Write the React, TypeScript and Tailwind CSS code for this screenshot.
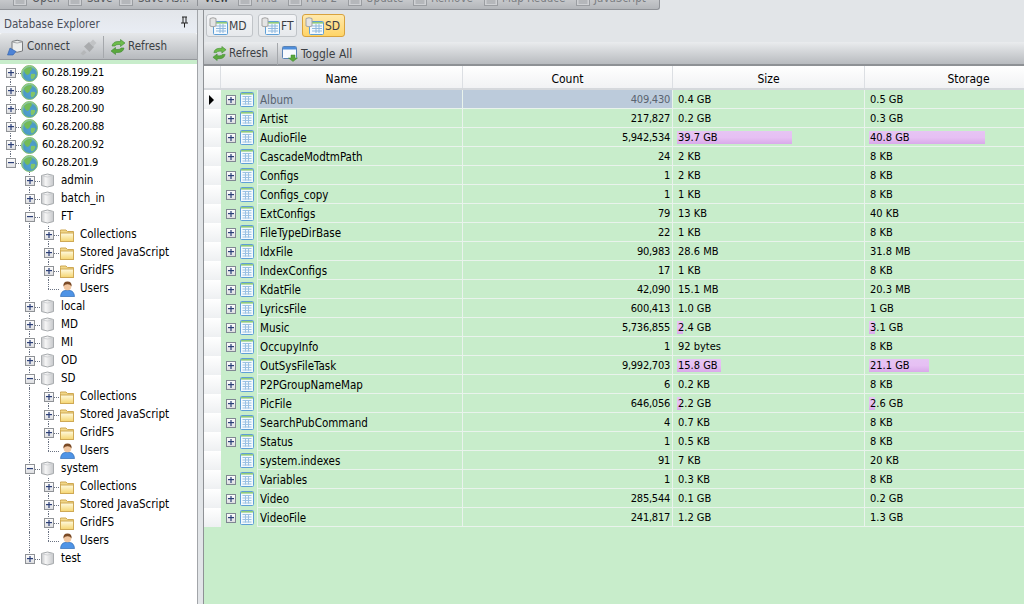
import React from 'react';

const font = "font-['DejaVu_Sans_Condensed','DejaVu_Sans',sans-serif]";

const PlusBox = ({ open = false, tree = false }: { open?: boolean; tree?: boolean }) => (
  <svg width="10" height="10" viewBox="0 0 10 10" className="relative block shrink-0">
    <defs>
      <linearGradient id="boxg" x1="0" y1="0" x2="0" y2="1">
        <stop offset="0" stopColor="#ffffff" />
        <stop offset="1" stopColor="#dcdde0" />
      </linearGradient>
    </defs>
    <rect x="0.5" y="0.5" width="9" height="9" fill="url(#boxg)" stroke={tree ? '#8f9296' : '#7f8792'} />
    <rect x="2" y="4" width="6" height="1.2" fill="#2b3f78" />
    {!open && <rect x="4.4" y="2" width="1.2" height="6" fill="#2b3f78" />}
  </svg>
);

const Globe = () => (
  <svg width="17" height="17" viewBox="0 0 17 17" className="block shrink-0">
    <defs>
      <radialGradient id="gl" cx="0.55" cy="0.6" r="0.6">
        <stop offset="0" stopColor="#4f9fd6" />
        <stop offset="0.65" stopColor="#4c9ac4" />
        <stop offset="1" stopColor="#a4d88f" />
      </radialGradient>
    </defs>
    <circle cx="8.5" cy="8.5" r="8" fill="url(#gl)" stroke="#86c070" />
    <path d="M3 5 Q6 1.5 10 2 Q12 4 9.5 6 Q9 9 6.5 10 Q3.5 9 3 5Z" fill="#74bb58" />
    <path d="M10 9 Q14 8 14.5 10 Q13.5 14 10.5 14.5 Q9 12 10 9Z" fill="#82c568" />
  </svg>
);

const Db = () => (
  <svg width="13" height="15" viewBox="0 0 13 15" className="-mt-px block shrink-0">
    <defs>
      <linearGradient id="dbg" x1="0" y1="0" x2="1" y2="0">
        <stop offset="0" stopColor="#c4c6c9" />
        <stop offset="0.35" stopColor="#f6f6f6" />
        <stop offset="1" stopColor="#c6c8cb" />
      </linearGradient>
    </defs>
    <path d="M0.5 2.5 Q6.5 -0.5 12.5 2.5 V12.5 Q6.5 15.5 0.5 12.5Z" fill="url(#dbg)" stroke="#a9acaf" />
    <path d="M1 3 Q6.5 5 12 3" fill="none" stroke="#d0d2d4" />
  </svg>
);

const Folder = () => (
  <svg width="14" height="13" viewBox="0 0 14 13" className="block shrink-0">
    <defs>
      <linearGradient id="fg" x1="0" y1="0" x2="0" y2="1">
        <stop offset="0" stopColor="#fffbe2" />
        <stop offset="1" stopColor="#f5d56f" />
      </linearGradient>
    </defs>
    <path d="M0.5 2.5 V1 H6 L7.5 2.5 H13.5 V12.5 H0.5Z" fill="#f1d687" stroke="#cfa955" />
    <rect x="0.5" y="4" width="13" height="8.5" fill="url(#fg)" stroke="#cfa955" />
  </svg>
);

const UserIcon = () => (
  <svg width="15" height="16" viewBox="0 0 15 16" className="block shrink-0">
    <path d="M0.5 15.5 Q1 10 5 9.5 H10 Q14 10 14.5 15.5Z" fill="#4f94e6" stroke="#2f6bb5" strokeWidth="0.7" />
    <circle cx="7.5" cy="5.5" r="3.8" fill="#f0c6a0" />
    <path d="M3.4 5.5 Q3 0.5 7.5 0.5 Q12 0.5 11.6 5.5 Q10 3 7.5 3.2 Q5 3 3.4 5.5Z" fill="#7a4a26" />
  </svg>
);

const TableIcon = () => (
  <svg width="14" height="15" viewBox="0 0 14 15" className="block shrink-0">
    <rect x="0.5" y="0.5" width="13" height="14" rx="1" fill="#f4f9fd" stroke="#5f9fd6" />
    <rect x="1" y="1" width="12" height="1.6" fill="#8fcb7a" />
    <path d="M2.5 4.5 H11.5 M2.5 7 H11.5 M2.5 9.5 H11.5 M2.5 12 H11.5" stroke="#9cc2e4" />
    <path d="M5.5 4 V12.5 M8.5 4 V12.5" stroke="#9cc2e4" />
  </svg>
);

const CollIcon = () => (
  <svg width="19" height="18" viewBox="0 0 19 18" className="block shrink-0">
    <rect x="4.5" y="4.5" width="14" height="13" rx="1" fill="#f4f9fd" stroke="#5f9fd6" />
    <rect x="5" y="5" width="13" height="1.6" fill="#8fcb7a" />
    <path d="M7 9 H17 M7 11.5 H17 M7 14 H17 M11 7 V16 M14 7 V16" stroke="#8fb8de" />
    <path d="M1 1.5 Q4 0 7 1.5 V9 Q4 10.5 1 9Z" fill="#e4e4e4" stroke="#a3a3a3" />
  </svg>
);

const RefreshIcon = ({ size = 16 }: { size?: number }) => (
  <svg width={size} height={size} viewBox="0 0 16 16" className="block shrink-0">
    <path d="M2 7 Q3 2.5 8 2.5 H10.5 V0.5 L15 4 L10.5 7.5 V5.5 H8 Q5.5 5.5 5 7Z" fill="#6dbb4b" stroke="#3f8a32" strokeWidth="0.6" />
    <path d="M14 9 Q13 13.5 8 13.5 H5.5 V15.5 L1 12 L5.5 8.5 V10.5 H8 Q10.5 10.5 11 9Z" fill="#5aa83c" stroke="#3f8a32" strokeWidth="0.6" />
  </svg>
);

const ConnectIcon = () => (
  <svg width="17" height="17" viewBox="0 0 17 17" className="block shrink-0">
    <path d="M5 2.5 Q10 0 15.5 2.5 V12 Q10 14.5 5 12Z" fill="#eceded" stroke="#77797c" />
    <path d="M5 3 Q10 5 15.5 3" fill="none" stroke="#a6a8aa" />
    <path d="M0.5 16 L3 9 L9 12.5 L6 16Z" fill="#4d83d6" stroke="#2f5ea8" strokeWidth="0.6" />
  </svg>
);

const PlugIcon = () => (
  <svg width="17" height="17" viewBox="0 0 17 17" className="block shrink-0">
    <path d="M0.5 14.5 L4 11 L6.5 13.5 L3 16.5Z" fill="#b5b7b9" />
    <path d="M4 7.5 L9 3 L14 8 L9.5 13Z" fill="#a9abad" />
    <path d="M9.5 4 L13 0.5 L16.5 4 L13 7.5Z" fill="#c1c3c5" />
  </svg>
);

const ToggleIcon = () => (
  <svg width="16" height="17" viewBox="0 0 16 17" className="block shrink-0">
    <rect x="0.5" y="1.5" width="14" height="12" rx="1" fill="#f7fafd" stroke="#5a83b5" />
    <rect x="1" y="2" width="13" height="2.5" fill="#4f8edb" />
    <path d="M9 10 H13 V13 H15.5 L11 16.5 L6.5 13 H9Z" fill="#5aa83c" stroke="#3f8a32" strokeWidth="0.5" />
  </svg>
);

const PageStub = () => (
  <svg width="14" height="14" viewBox="0 0 14 14" className="block shrink-0">
    <rect x="0.5" y="0.5" width="13" height="13" fill="#cfd1d4" stroke="#9a9da1" />
    <path d="M2.5 9 H11.5 M2.5 11 H11.5" stroke="#9a9da1" />
    <rect x="3" y="1" width="8" height="5" fill="#e4e5e7" />
  </svg>
);

type Node = {
  label: string;
  depth: 0 | 1 | 2;
  kind: 'globe' | 'db' | 'folder' | 'user';
  toggle?: 'plus' | 'minus';
  above?: boolean;
  below?: boolean;
  rail?: boolean;
};

const sub = (rail: boolean): Node[] => [
  { label: 'Collections', depth: 2, kind: 'folder', toggle: 'plus', above: true, below: true, rail },
  { label: 'Stored JavaScript', depth: 2, kind: 'folder', toggle: 'plus', above: true, below: true, rail },
  { label: 'GridFS', depth: 2, kind: 'folder', toggle: 'plus', above: true, below: true, rail },
  { label: 'Users', depth: 2, kind: 'user', above: true, rail },
];

const db = (label: string, open = false): Node => ({
  label,
  depth: 1,
  kind: 'db',
  toggle: open ? 'minus' : 'plus',
  above: true,
  below: label !== 'test',
});

const treeRows: Node[] = [
  { label: '60.28.199.21', depth: 0, kind: 'globe', toggle: 'plus', below: true },
  { label: '60.28.200.89', depth: 0, kind: 'globe', toggle: 'plus', above: true, below: true },
  { label: '60.28.200.90', depth: 0, kind: 'globe', toggle: 'plus', above: true, below: true },
  { label: '60.28.200.88', depth: 0, kind: 'globe', toggle: 'plus', above: true, below: true },
  { label: '60.28.200.92', depth: 0, kind: 'globe', toggle: 'plus', above: true, below: true },
  { label: '60.28.201.9', depth: 0, kind: 'globe', toggle: 'minus', above: true },
  db('admin'),
  db('batch_in'),
  db('FT', true),
  ...sub(true),
  db('local'),
  db('MD'),
  db('MI'),
  db('OD'),
  db('SD', true),
  ...sub(true),
  db('system', true),
  ...sub(true),
  db('test'),
];

const TreeRow = ({ node }: { node: Node }) => (
  <div className="flex h-[18px] items-center pl-px">
    {node.depth > 0 && <div className="h-full w-[19px] shrink-0" />}
    {node.depth === 2 && (
      <div className="relative h-full w-[19px] shrink-0">
        {node.rail && <div className="absolute left-[9px] top-0 h-full border-l border-dotted border-gray-500" />}
      </div>
    )}
    <div className="relative flex h-full w-[19px] shrink-0 items-center justify-center">
      {node.above && <div className="absolute left-[9px] top-0 h-[9px] border-l border-dotted border-gray-500" />}
      {node.below && <div className="absolute left-[9px] top-[9px] h-[9px] border-l border-dotted border-gray-500" />}
      <div className="absolute left-[9px] top-[9px] w-[11px] border-t border-dotted border-gray-500" />
      {node.toggle && <PlusBox tree open={node.toggle === 'minus'} />}
    </div>
    <div className={node.depth === 0 ? 'ml-px flex w-[21px] shrink-0' : 'ml-[2px] flex w-[20px] shrink-0'}>
      {node.kind === 'globe' && <Globe />}
      {node.kind === 'db' && <Db />}
      {node.kind === 'folder' && <Folder />}
      {node.kind === 'user' && <UserIcon />}
    </div>
    <span className={node.depth === 0 ? 'text-[11px] leading-[18px] tracking-[-0.35px] text-black' : '-mt-[2px] text-[11.5px] leading-[18px] text-black'}>
      {node.label}
    </span>
  </div>
);

type Coll = {
  name: string;
  count: string;
  size: string;
  storage: string;
  noPlus?: boolean;
  sizeBar?: number;
  storeBar?: number;
};

const colls: Coll[] = [
  { name: 'Album', count: '409,430', size: '0.4 GB', storage: '0.5 GB' },
  { name: 'Artist', count: '217,827', size: '0.2 GB', storage: '0.3 GB' },
  { name: 'AudioFile', count: '5,942,534', size: '39.7 GB', storage: '40.8 GB', sizeBar: 115, storeBar: 116 },
  { name: 'CascadeModtmPath', count: '24', size: '2 KB', storage: '8 KB' },
  { name: 'Configs', count: '1', size: '2 KB', storage: '8 KB' },
  { name: 'Configs_copy', count: '1', size: '1 KB', storage: '8 KB' },
  { name: 'ExtConfigs', count: '79', size: '13 KB', storage: '40 KB' },
  { name: 'FileTypeDirBase', count: '22', size: '1 KB', storage: '8 KB' },
  { name: 'IdxFile', count: '90,983', size: '28.6 MB', storage: '31.8 MB' },
  { name: 'IndexConfigs', count: '17', size: '1 KB', storage: '8 KB' },
  { name: 'KdatFile', count: '42,090', size: '15.1 MB', storage: '20.3 MB' },
  { name: 'LyricsFile', count: '600,413', size: '1.0 GB', storage: '1 GB' },
  { name: 'Music', count: '5,736,855', size: '2.4 GB', storage: '3.1 GB', sizeBar: 6, storeBar: 6 },
  { name: 'OccupyInfo', count: '1', size: '92 bytes', storage: '8 KB' },
  { name: 'OutSysFileTask', count: '9,992,703', size: '15.8 GB', storage: '21.1 GB', sizeBar: 44, storeBar: 60 },
  { name: 'P2PGroupNameMap', count: '6', size: '0.2 KB', storage: '8 KB' },
  { name: 'PicFile', count: '646,056', size: '2.2 GB', storage: '2.6 GB', sizeBar: 4, storeBar: 6 },
  { name: 'SearchPubCommand', count: '4', size: '0.7 KB', storage: '8 KB' },
  { name: 'Status', count: '1', size: '0.5 KB', storage: '8 KB' },
  { name: 'system.indexes', count: '91', size: '7 KB', storage: '20 KB', noPlus: true },
  { name: 'Variables', count: '1', size: '0.3 KB', storage: '8 KB' },
  { name: 'Video', count: '285,544', size: '0.1 GB', storage: '0.2 GB' },
  { name: 'VideoFile', count: '241,817', size: '1.2 GB', storage: '1.3 GB' },
];

const ValueCell = ({ value, bar, className }: { value: string; bar?: number; className: string }) => (
  <div className={`relative flex h-full shrink-0 items-center border-r border-[#e9f3ec] pl-[5px] pt-px ${className}`}>
    {bar && (
      <div
        className="absolute left-[4px] top-[3px] h-[13px] bg-gradient-to-b from-[#e6c4f4] via-[#e6c0f3] to-[#d9a9ea]"
        style={{ width: bar }}
      />
    )}
    <span className="relative">{value}</span>
  </div>
);

const Row = ({ c, selected }: { c: Coll; selected: boolean }) => (
  <div className="flex h-[19px] shrink-0 text-[11px] leading-[18px] text-black">
    <div className="relative flex h-[19px] w-[17px] shrink-0 items-center bg-gradient-to-b from-white to-[#eef0f2] pl-[5px]">
      {selected && <div className="h-0 w-0 border-y-[5px] border-l-[5px] border-y-transparent border-l-black" />}
    </div>
    <div className="flex h-[19px] w-[36px] shrink-0 items-center bg-[#c8edcb] pl-[5px]">
      {c.noPlus ? <div className="w-[10px]" /> : <PlusBox />}
      <div className="ml-[4px]">
        <TableIcon />
      </div>
    </div>
    <div className="flex h-[19px] min-w-0 flex-1 border-b border-[#e9f3ec] bg-[#c8edcb]">
      <div className={`flex h-full w-[206px] shrink-0 items-center border-x border-[#e9f3ec] pl-[2px] pt-px text-[11.5px] ${selected ? 'bg-[#bccbdb] text-[#5a6470]' : ''}`}>
        {c.name}
      </div>
      <div className={`flex h-full w-[210px] shrink-0 items-center justify-end border-r border-[#e9f3ec] pr-[2px] pt-px tracking-[-0.25px] ${selected ? 'bg-[#bccbdb] text-[#5a6470]' : ''}`}>
        {c.count}
      </div>
      <ValueCell value={c.size} bar={c.sizeBar} className="w-[192px]" />
      <ValueCell value={c.storage} bar={c.storeBar} className="w-[208px]" />
    </div>
  </div>
);

const HeadCell = ({ label, className }: { label: string; className: string }) => (
  <div className={`flex h-full shrink-0 items-center justify-center border-r border-[#dcdfe3] pt-[3px] ${className}`}>{label}</div>
);

const topItems = [
  { label: 'Open', cls: 'w-[68px] pl-[13px]' },
  { label: 'Save', cls: 'w-[51px]' },
  { label: 'Save As...', cls: 'w-[78px]' },
];
const topItems2 = [
  { label: 'Find', cls: 'w-[50px]' },
  { label: 'Find 2', cls: 'w-[60px]' },
  { label: 'Update', cls: 'w-[65px]' },
  { label: 'Remove', cls: 'w-[71px]' },
  { label: 'Map Reduce', cls: 'w-[92px]' },
  { label: 'JavaScript', cls: 'w-[84px]' },
];

const btn = 'flex h-[23px] items-center gap-px rounded-[3px] border pl-[2px] text-xs';

const App = () => {
  return (
    <div className={`flex h-[604px] w-[1024px] flex-col overflow-hidden bg-[#e2e5e8] ${font}`}>
      {/* cut off ribbon at the top of the window */}
      <div className="h-[10px] w-[660px] shrink-0 overflow-hidden rounded-br-[3px] border-b border-r border-[#8f9297] bg-gradient-to-b from-[#c6c8cb] to-[#b3b6ba]">
        <div className="-mt-[8px] flex h-[14px] items-center text-[11.5px] text-[#55585c]">
          {topItems.map((t) => (
            <div key={t.label} className={`flex shrink-0 items-center gap-[5px] ${t.cls}`}>
              <PageStub />
              <span>{t.label}</span>
            </div>
          ))}
          <div className="h-full w-px shrink-0 bg-[#8f9297]" />
          <div className="w-[40px] shrink-0 pl-[6px] text-[#33363a]">View</div>
          {topItems2.map((t) => (
            <div key={t.label} className={`flex shrink-0 items-center gap-[4px] text-[#7b7e82] ${t.cls}`}>
              <PageStub />
              <span>{t.label}</span>
            </div>
          ))}
        </div>
      </div>

      <div className="flex min-h-0 flex-1">
        {/* left explorer */}
        <div className="flex w-[198px] shrink-0 flex-col border-r border-[#a2a5a9] bg-white">
          <div className="flex h-[23px] shrink-0 items-center justify-between bg-gradient-to-b from-[#e3e6ea] to-[#e9edf4] pl-[4px] pr-[8px] pt-[6px] text-[11.5px] text-[#4b4f5a]">
            <span>Database Explorer</span>
            <svg width="9" height="12" viewBox="0 0 9 12" className="-mt-[6px] block">
              <path d="M2 1 H7 M3 1 V7 M6 1 V7 M1 7 H8 M4.5 7 V11.5" stroke="#222" fill="none" />
            </svg>
          </div>
          <div className="flex h-[27px] shrink-0 items-center rounded-t-[2px] border-b border-[#95989c] bg-gradient-to-b from-[#e6e8ea] to-[#b7babe] pl-[7px] pt-[2px] text-[11.5px] text-[#3c3f44]">
            <ConnectIcon />
            <span className="ml-[3px] w-[44px]">Connect</span>
            <div className="ml-[9px]">
              <PlugIcon />
            </div>
            <div className="ml-[6px] h-[22px] w-px bg-[#a5a8ac]" />
            <div className="ml-[6px]">
              <RefreshIcon />
            </div>
            <span className="ml-[2px]">Refresh</span>
          </div>
          <div className="h-[4px] shrink-0 bg-[#c8edcb]" />
          <div className="flex flex-col">
            {treeRows.map((n, i) => (
              <TreeRow key={i} node={n} />
            ))}
          </div>
        </div>

        {/* splitter */}
        <div className="w-[6px] shrink-0 border-r border-[#8e9195] bg-[#e2e5e8]" />

        {/* right pane */}
        <div className="flex min-w-0 flex-1 flex-col">
          <div className="flex h-[32px] shrink-0 gap-[5px] pl-[2px] pt-[4px] text-[#3c3f44]">
            <div className={`${btn} w-[47px] border-[#c0c4c8] bg-gradient-to-b from-[#f4f5f7] to-[#e6e9ec]`}>
              <CollIcon />
              MD
            </div>
            <div className={`${btn} w-[39px] border-[#c0c4c8] bg-gradient-to-b from-[#f4f5f7] to-[#e6e9ec]`}>
              <CollIcon />
              FT
            </div>
            <div className={`${btn} w-[43px] border-[#d8a23e] bg-gradient-to-b from-[#ffe9ab] to-[#ffd465]`}>
              <CollIcon />
              SD
            </div>
          </div>
          <div className="flex h-[24px] shrink-0 items-center rounded-tl-[3px] border-b-2 border-[#8e9195] bg-gradient-to-b from-[#eaecee] to-[#b8bbbf] pl-[8px] pt-px text-[11.5px] text-[#3c3f44]">
            <RefreshIcon size={15} />
            <span className="ml-[2px] w-[38px]">Refresh</span>
            <div className="ml-[10px] h-[22px] w-px bg-[#a5a8ac]" />
            <div className="ml-[4px]">
              <ToggleIcon />
            </div>
            <span className="ml-[3px] text-xs">Toggle All</span>
          </div>
          <div className="flex h-[24px] shrink-0 overflow-hidden border-b-2 border-[#d5d8dc] bg-gradient-to-b from-white to-[#f1f2f4] text-xs text-black">
            <HeadCell label="" className="w-[17px]" />
            <HeadCell label="Name" className="w-[242px]" />
            <HeadCell label="Count" className="w-[210px]" />
            <HeadCell label="Size" className="w-[192px]" />
            <HeadCell label="Storage" className="w-[208px]" />
          </div>
          <div className="flex min-h-0 flex-1 flex-col overflow-hidden bg-[#c8edcb]">
            {colls.map((c, i) => (
              <Row key={c.name} c={c} selected={i === 0} />
            ))}
          </div>
        </div>
      </div>
    </div>
  );
};

export default App;
